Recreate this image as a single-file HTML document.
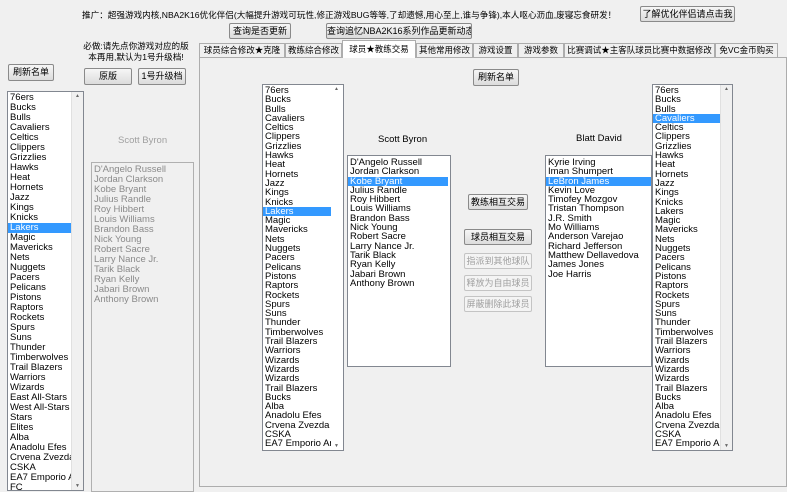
<!DOCTYPE html>
<html><head><meta charset="utf-8"><style>
*{margin:0;padding:0;box-sizing:border-box}
body{width:787px;height:487px;background:#f0f0f0;position:relative;overflow:hidden;font-family:"Liberation Sans","Noto Sans CJK SC",sans-serif;font-size:9px;color:#000}
.a{position:absolute}
.btn{position:absolute;border:1px solid #8a8a8a;border-radius:2px;background:linear-gradient(#f6f6f6,#dcdcdc);text-align:center;font-size:9px;line-height:14px;white-space:nowrap;overflow:hidden}
.dis{color:#a0a0a0;border-color:#c4c4c4;background:#f4f4f4}
.list{position:absolute;background:#fff;border:1px solid #828790;overflow:hidden;font-size:9.5px}
.list div{height:9.3px;line-height:9.3px;padding-left:2px;white-space:nowrap}
.l10 div{height:10px;line-height:10px}
.sel{background:#3399ff;color:#fff}
.sb{position:absolute;right:0;top:0;bottom:0;width:12px;background:#f0f0f0;border-left:1px solid #e0e0e0}
.sb:before{content:"▲";position:absolute;top:1px;left:3px;font-size:5px;color:#666}
.sb:after{content:"▼";position:absolute;bottom:1px;left:3px;font-size:5px;color:#666}
.tab{position:absolute;top:43px;height:14px;border:1px solid #adadad;border-bottom:none;background:#f0f0f0;font-size:8.5px;line-height:13px;text-align:center;white-space:nowrap;overflow:hidden}
</style></head><body>
<div class="a" style="left:82px;top:9px;font-size:8.6px;white-space:nowrap">推广：超强游戏内核,NBA2K16优化伴侣(大幅提升游戏可玩性,修正游戏BUG等等,了却遗憾,用心至上,谁与争锋),本人呕心沥血,废寝忘食研发！</div>
<div class="btn" style="left:640px;top:6px;width:95px;height:16px">了解优化伴侣请点击我</div>
<div class="btn" style="left:229px;top:23px;width:62px;height:16px">查询是否更新</div>
<div class="btn" style="left:326px;top:23px;width:146px;height:16px">查询追忆NBA2K16系列作品更新动态</div>
<div class="a" style="left:82px;top:41px;width:108px;text-align:center;font-size:8.6px;line-height:11px">必做:请先点你游戏对应的版<br>本再用,默认为1号升级档!</div>
<div class="btn" style="left:8px;top:64px;width:46px;height:17px">刷新名单</div>
<div class="btn" style="left:84px;top:68px;width:48px;height:17px">原版</div>
<div class="btn" style="left:138px;top:68px;width:48px;height:17px">1号升级档</div>

<div class="a" style="left:199px;top:57px;width:588px;height:430px;border:1px solid #adadad;background:#f0f0f0"></div>
<div class="tab" style="left:199px;width:86px">球员综合修改★克隆</div>
<div class="tab" style="left:285px;width:57px">教练综合修改</div>
<div class="tab" style="left:342px;width:74px;top:40px;height:18px;background:#fff;line-height:17px;z-index:2">球员★教练交易</div>
<div class="tab" style="left:416px;width:57px">其他常用修改</div>
<div class="tab" style="left:473px;width:45px">游戏设置</div>
<div class="tab" style="left:518px;width:46px">游戏参数</div>
<div class="tab" style="left:564px;width:151px">比赛调试★主客队球员比赛中数据修改</div>
<div class="tab" style="left:715px;width:63px">免VC金币购买</div>

<div class="list l10" style="left:7px;top:91px;width:77px;height:400px"><div style="margin-top:1px">76ers</div><div>Bucks</div><div>Bulls</div><div>Cavaliers</div><div>Celtics</div><div>Clippers</div><div>Grizzlies</div><div>Hawks</div><div>Heat</div><div>Hornets</div><div>Jazz</div><div>Kings</div><div>Knicks</div><div class="sel">Lakers</div><div>Magic</div><div>Mavericks</div><div>Nets</div><div>Nuggets</div><div>Pacers</div><div>Pelicans</div><div>Pistons</div><div>Raptors</div><div>Rockets</div><div>Spurs</div><div>Suns</div><div>Thunder</div><div>Timberwolves</div><div>Trail Blazers</div><div>Warriors</div><div>Wizards</div><div>East All-Stars</div><div>West All-Stars</div><div>Stars</div><div>Elites</div><div>Alba</div><div>Anadolu Efes</div><div>Crvena Zvezda T</div><div>CSKA</div><div>EA7 Emporio Ar</div><div>FC</div><span class="sb"></span></div>

<div class="a" style="left:118px;top:135px;color:#a0a0a0;font-size:9.5px">Scott Byron</div>
<div class="list l10" style="left:91px;top:162px;width:103px;height:330px;background:#f0f0f0;color:#8a8a8a;border-color:#b0b0b0"><div style="margin-top:2px">D'Angelo Russell</div><div>Jordan Clarkson</div><div>Kobe Bryant</div><div>Julius Randle</div><div>Roy Hibbert</div><div>Louis Williams</div><div>Brandon Bass</div><div>Nick Young</div><div>Robert Sacre</div><div>Larry Nance Jr.</div><div>Tarik Black</div><div>Ryan Kelly</div><div>Jabari Brown</div><div>Anthony Brown</div></div>

<div class="btn" style="left:473px;top:69px;width:46px;height:17px">刷新名单</div>

<div class="list" style="left:262px;top:84px;width:82px;height:367px"><div style="margin-top:1px">76ers</div><div>Bucks</div><div>Bulls</div><div>Cavaliers</div><div>Celtics</div><div>Clippers</div><div>Grizzlies</div><div>Hawks</div><div>Heat</div><div>Hornets</div><div>Jazz</div><div>Kings</div><div>Knicks</div><div class="sel">Lakers</div><div>Magic</div><div>Mavericks</div><div>Nets</div><div>Nuggets</div><div>Pacers</div><div>Pelicans</div><div>Pistons</div><div>Raptors</div><div>Rockets</div><div>Spurs</div><div>Suns</div><div>Thunder</div><div>Timberwolves</div><div>Trail Blazers</div><div>Warriors</div><div>Wizards</div><div>Wizards</div><div>Wizards</div><div>Trail Blazers</div><div>Bucks</div><div>Alba</div><div>Anadolu Efes</div><div>Crvena Zvezda Te</div><div>CSKA</div><div>EA7 Emporio Arma</div><span class="sb" style="background:#fff;border:none"></span></div>

<div class="a" style="left:378px;top:134px;font-size:9.5px">Scott Byron</div>
<div class="list" style="left:347px;top:155px;width:104px;height:212px"><div style="margin-top:2px">D'Angelo Russell</div><div>Jordan Clarkson</div><div class="sel" style="margin-right:2px">Kobe Bryant</div><div>Julius Randle</div><div>Roy Hibbert</div><div>Louis Williams</div><div>Brandon Bass</div><div>Nick Young</div><div>Robert Sacre</div><div>Larry Nance Jr.</div><div>Tarik Black</div><div>Ryan Kelly</div><div>Jabari Brown</div><div>Anthony Brown</div></div>

<div class="a" style="left:576px;top:133px;font-size:9.5px">Blatt David</div>
<div class="list" style="left:545px;top:155px;width:107px;height:212px"><div style="margin-top:2px">Kyrie Irving</div><div>Iman Shumpert</div><div class="sel">LeBron James</div><div>Kevin Love</div><div>Timofey Mozgov</div><div>Tristan Thompson</div><div>J.R. Smith</div><div>Mo Williams</div><div>Anderson Varejao</div><div>Richard Jefferson</div><div>Matthew Dellavedova</div><div>James Jones</div><div>Joe Harris</div></div>

<div class="btn" style="left:468px;top:194px;width:60px;height:16px">教练相互交易</div>
<div class="btn" style="left:464px;top:229px;width:68px;height:16px">球员相互交易</div>
<div class="btn dis" style="left:464px;top:253px;width:68px;height:16px">指派到其他球队</div>
<div class="btn dis" style="left:464px;top:275px;width:68px;height:16px">释放为自由球员</div>
<div class="btn dis" style="left:464px;top:296px;width:68px;height:16px">屏蔽删除此球员</div>

<div class="list" style="left:652px;top:84px;width:81px;height:367px"><div style="margin-top:1px">76ers</div><div>Bucks</div><div>Bulls</div><div class="sel" style="margin-right:12px">Cavaliers</div><div>Celtics</div><div>Clippers</div><div>Grizzlies</div><div>Hawks</div><div>Heat</div><div>Hornets</div><div>Jazz</div><div>Kings</div><div>Knicks</div><div>Lakers</div><div>Magic</div><div>Mavericks</div><div>Nets</div><div>Nuggets</div><div>Pacers</div><div>Pelicans</div><div>Pistons</div><div>Raptors</div><div>Rockets</div><div>Spurs</div><div>Suns</div><div>Thunder</div><div>Timberwolves</div><div>Trail Blazers</div><div>Warriors</div><div>Wizards</div><div>Wizards</div><div>Wizards</div><div>Trail Blazers</div><div>Bucks</div><div>Alba</div><div>Anadolu Efes</div><div>Crvena Zvezda Te</div><div>CSKA</div><div>EA7 Emporio Arma</div><span class="sb"></span></div>
</body></html>
